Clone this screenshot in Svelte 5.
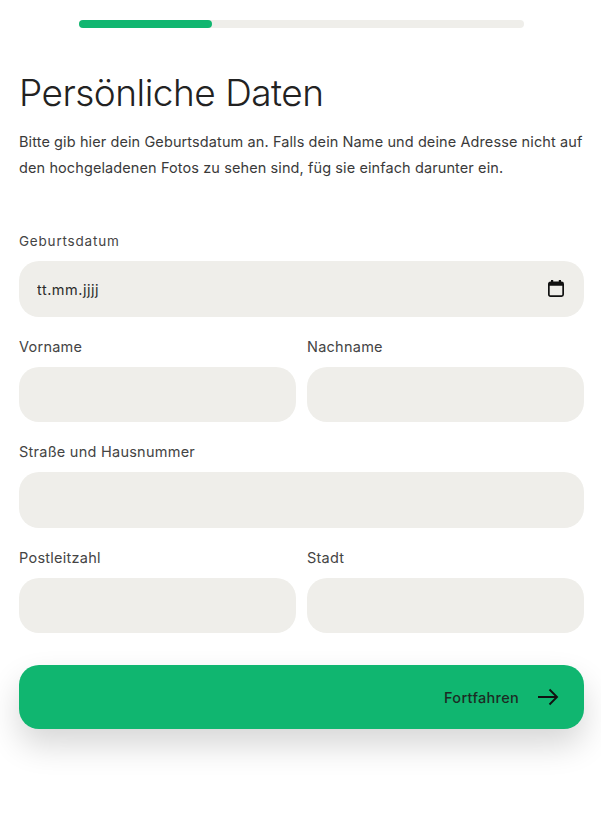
<script lang="ts">
  const rows = [
    [{ label: 'Vorname' }, { label: 'Nachname' }],
    [{ label: 'Straße und Hausnummer' }],
    [{ label: 'Postleitzahl' }, { label: 'Stadt' }]
  ];
</script>

<main class="page">
  <div class="progress"><div class="progress-fill"></div></div>

  <h1>Persönliche Daten</h1>
  <p class="intro">Bitte gib hier dein Geburtsdatum an. Falls dein Name und deine Adresse nicht auf den hochgeladenen Fotos zu sehen sind, füg sie einfach darunter ein.</p>

  <form class="form" onsubmit={(e) => e.preventDefault()}>
    <label class="field">
      <span class="label birth">Geburtsdatum</span>
      <span class="date-input">
        <input type="text" value="tt.mm.jjjj" aria-label="Geburtsdatum" />
        <svg width="16" height="17" viewBox="0 0 16 17" aria-hidden="true">
          <rect x="0.85" y="2.35" width="14.3" height="13.8" rx="1.6" fill="none" stroke="#111" stroke-width="1.7" />
          <path d="M1 2h14v3.8H1zM3 0h2.2v2H3zM10.8 0H13v2h-2.2z" fill="#111" />
        </svg>
      </span>
    </label>

    {#each rows as row}
      <div class="row">
        {#each row as field}
          <label class="field">
            <span class="label">{field.label}</span>
            <input type="text" />
          </label>
        {/each}
      </div>
    {/each}

    <button class="submit" type="submit">
      Fortfahren
      <svg width="22" height="18" viewBox="0 0 22 18" aria-hidden="true">
        <path d="M1 9h19M12.5 1.5 20 9l-7.5 7.5" fill="none" stroke="#111" stroke-width="1.9" />
      </svg>
    </button>
  </form>
</main>

<style>
  :global(body) {
    margin: 0;
    background: #fff;
    font-family: Inter, "Liberation Sans", sans-serif;
    color: #2b2b2b;
  }

  .page {
    box-sizing: border-box;
    width: 601px;
    min-height: 814px;
    padding: 20px 17px 0 19px;
  }

  .progress {
    width: 445px;
    height: 8px;
    margin-left: 60px;
    border-radius: 4px;
    background: #efeeea;
  }

  .progress-fill {
    width: 133px;
    height: 100%;
    border-radius: 4px;
    background: #10b670;
  }

  h1 {
    margin: 41px 0 0;
    font-size: 37px;
    line-height: 48px;
    font-weight: 300;
    letter-spacing: -0.5px;
    color: #222;
  }

  .intro {
    margin: 12px 0 0;
    font-size: 14.5px;
    line-height: 26px;
    font-weight: 400;
    letter-spacing: 0.1px;
    color: #3a3a3a;
  }

  .form {
    display: flex;
    flex-direction: column;
    gap: 20px;
    margin-top: 50.25px;
  }

  .row {
    display: flex;
    gap: 11px;
  }

  .field {
    flex: 1;
    display: flex;
    flex-direction: column;
  }

  .label {
    font-size: 14.5px;
    line-height: 20px;
    letter-spacing: 0.25px;
    margin-bottom: 10px;
    color: #444;
  }

  .label.birth {
    font-size: 13.5px;
    letter-spacing: 0.8px;
  }

  input {
    box-sizing: border-box;
    width: 100%;
    height: 55.5px;
    padding: 0 18px;
    border: none;
    border-radius: 20px;
    outline: none;
    background: #efeeea;
    font: inherit;
    font-size: 14.5px;
    letter-spacing: 0.5px;
    color: #2b2b2b;
  }

  .date-input {
    position: relative;
    display: block;
  }

  .date-input svg {
    position: absolute;
    top: 18.5px;
    right: 20px;
  }

  .submit {
    display: flex;
    align-items: center;
    justify-content: flex-end;
    gap: 18px;
    height: 64px;
    margin-top: 12px;
    padding: 0 25px 0 0;
    border: none;
    border-radius: 20px;
    background: #10b670;
    box-shadow: 0 16px 32px rgba(0, 0, 0, 0.16);
    font: inherit;
    font-size: 14.5px;
    font-weight: 500;
    letter-spacing: 0.3px;
    color: #1c2b24;
  }
</style>
